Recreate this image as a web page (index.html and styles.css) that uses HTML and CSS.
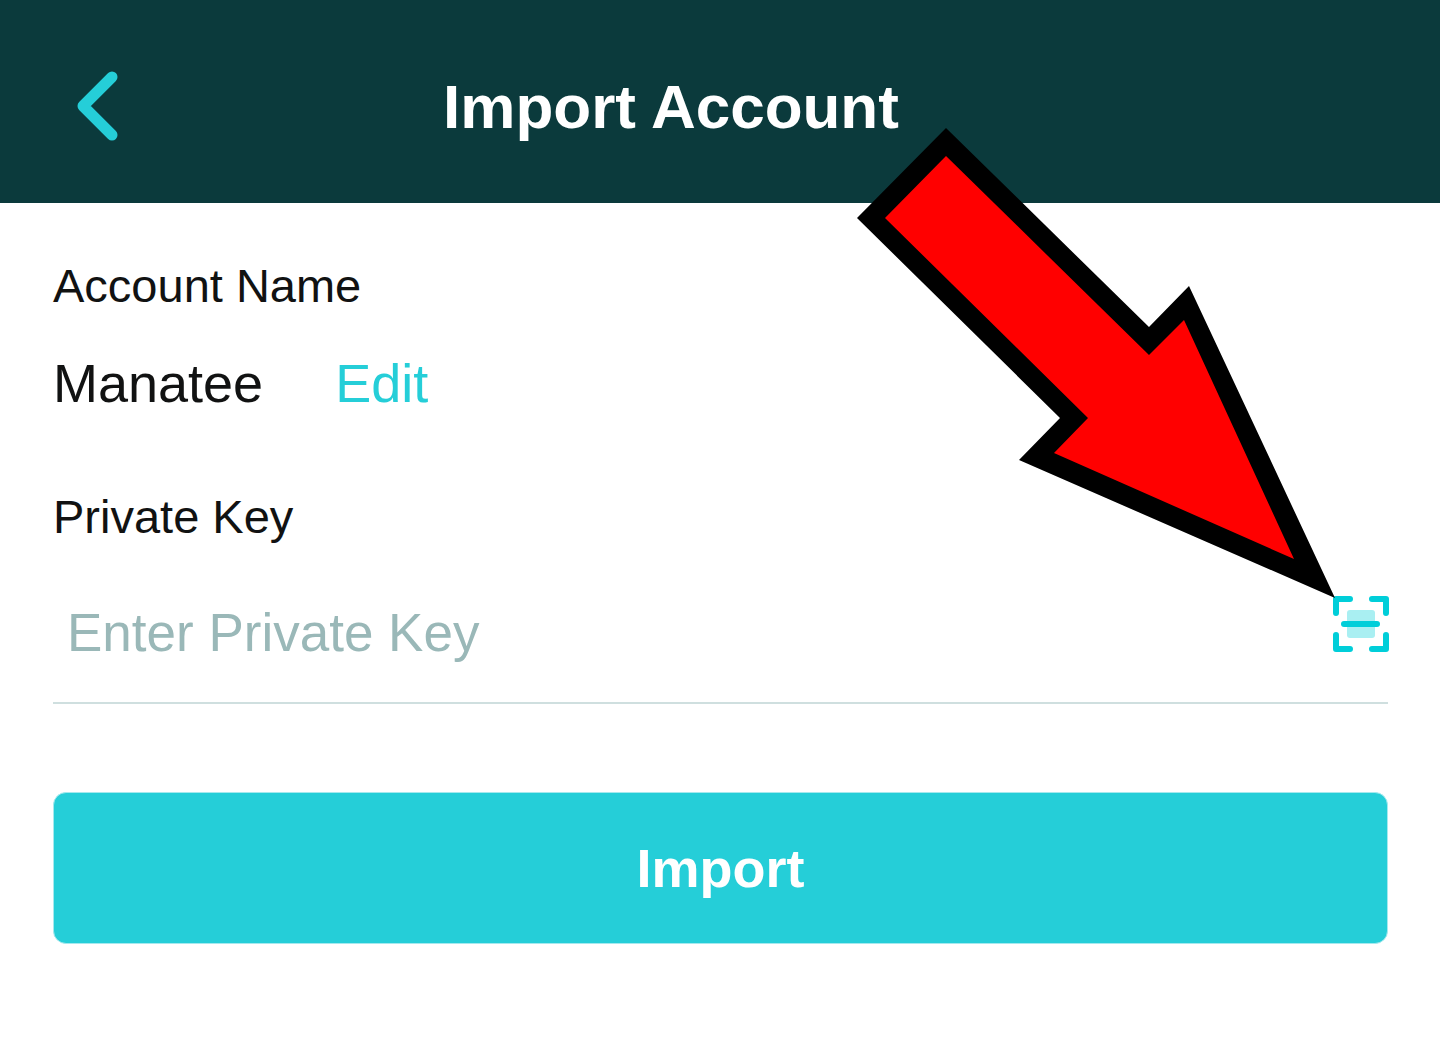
FILE: index.html
```html
<!DOCTYPE html>
<html lang="en">
<head>
    <meta charset="UTF-8">
    <meta name="viewport" content="width=device-width, initial-scale=1.0">
    <title>Import Account</title>
    <link rel="stylesheet" href="styles.css">
</head>
<body>
    <div class="page">
        <header class="header">
            <button type="button" class="back" aria-label="Back">
                <svg width="44" height="72" viewBox="0 0 44 72">
                    <path d="M36 6 L7 35 L36 64" />
                </svg>
            </button>
            <h1>Import Account</h1>
        </header>

        <form class="form">
            <h2 class="label">Account Name</h2>
            <div class="account">
                <span>Manatee</span>
                <a href="#">Edit</a>
            </div>

            <label class="label" for="privateKey">Private Key</label>
            <div class="field">
                <input type="text" id="privateKey" placeholder="Enter Private Key">
                <button type="button" class="scan" aria-label="Scan QR code">
                    <svg width="56" height="56" viewBox="0 0 56 56">
                        <rect x="15" y="14" width="28" height="28" rx="3" fill="#a9eff2" />
                        <path d="M12 28 H45" />
                        <path d="M4 17 V3 H18 M40 3 H54 V17 M54 39 V53 H40 M18 53 H4 V39" />
                    </svg>
                </button>
            </div>

            <button type="button" class="import">Import</button>
        </form>

        <!-- pointer to the scan button -->
        <svg class="pointer" width="478" height="470" viewBox="0 0 478 470" aria-hidden="true">
            <polygon points="89,0 292,199 332,158 478,470 162,332 203,290 0,90" fill="#000" />
            <polygon points="89,28 292,227 327,192 437,431 197,325 231,290 28,90" fill="#f00" />
        </svg>
    </div>
</body>
</html>
```
FILE: styles.css
```css
* {
    box-sizing: border-box;
}

body {
    margin: 0;
    font-family: "Liberation Sans", Arial, sans-serif;
    background: #fff;
    color: #111212;
}

button {
    padding: 0;
    border: none;
    background: none;
    font-family: inherit;
    cursor: pointer;
}

svg {
    display: block;
    overflow: visible;
}

.page {
    position: relative;
}

.header {
    display: grid;
    grid-template-columns: 120px 1fr 218px;
    align-items: center;
    min-height: 203px;
    padding-top: 10px;
    background: #0b3a3c;
    color: #fff;
}

.header h1 {
    margin: 0;
    font-size: 62px;
    line-height: 72px;
    text-align: center;
}

.back {
    justify-self: end;
}

.back path {
    fill: none;
    stroke: #25ced8;
    stroke-width: 11;
    stroke-linecap: round;
    stroke-linejoin: round;
}

.form {
    padding: 55px 52px 64px 53px;
}

.label {
    display: block;
    margin: 0;
    font-size: 47px;
    font-weight: normal;
    line-height: 56px;
}

.account {
    display: flex;
    gap: 72px;
    margin: 37px 0 74px;
    font-size: 54px;
    line-height: 64px;
}

.account a {
    color: #25ced8;
    text-decoration: none;
}

.field {
    display: flex;
    align-items: center;
    margin: 17px 0 88px;
    border-bottom: 2px solid #cfdfdf;
}

.field input {
    flex: 1;
    min-width: 0;
    height: 140px;
    padding: 0 14px;
    border: none;
    outline: none;
    background: none;
    color: inherit;
    font-family: inherit;
    font-size: 53px;
}

.field input::placeholder {
    color: #9ab8b8;
    opacity: 1;
}

.scan {
    margin-bottom: 16px;
}

.scan path {
    fill: none;
    stroke: #00ced9;
    stroke-width: 6;
    stroke-linecap: round;
    stroke-linejoin: round;
}

.import {
    width: 100%;
    height: 152px;
    border: 1px solid #a5e9ee;
    border-radius: 13px;
    background: #25ced8;
    color: #fff;
    font-size: 54px;
    font-weight: bold;
}

.pointer {
    position: absolute;
    top: 128px;
    right: 105px;
    pointer-events: none;
}
```
